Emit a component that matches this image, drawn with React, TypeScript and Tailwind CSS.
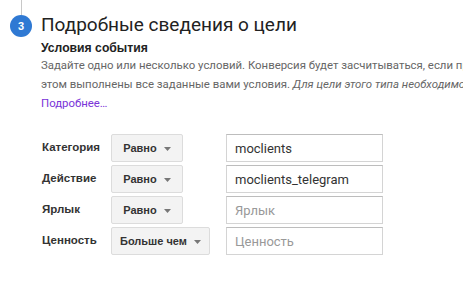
import React from "react";

const rows = [
  { label: "Категория", op: "Равно", value: "moclients", placeholder: "Категория" },
  { label: "Действие", op: "Равно", value: "moclients_telegram", placeholder: "Действие" },
  { label: "Ярлык", op: "Равно", value: "", placeholder: "Ярлык" },
  { label: "Ценность", op: "Больше чем", value: "", placeholder: "Ценность" },
];

function OpButton({ text }: { text: string }) {
  return (
    <button className="h-[28px] min-w-[72px] px-[8px] flex items-center justify-center gap-[7px] bg-[#f3f3f3] border border-[#dcdcdc] rounded-[2px] text-[11px] font-bold text-[#333] font-['Liberation_Sans',Arial,sans-serif]">
      <span>{text}</span>
      <svg width="7" height="4" viewBox="0 0 7 4" className="mt-[1px]">
        <path d="M0 0h7L3.5 4z" fill="#777" />
      </svg>
    </button>
  );
}

export default function App() {
  return (
    <div className="w-[463px] h-[283px] overflow-hidden bg-white font-['Roboto',sans-serif]">
      <div className="flex">
        {/* step marker */}
        <div className="w-[41px] shrink-0 flex flex-col items-center pl-px">
          <div className="w-px h-[15px] bg-[#c8c8c8]" />
          <div className="w-[22px] h-[22px] rounded-full bg-[#2f79d3] flex items-center justify-center text-white text-[11px] font-bold font-['Liberation_Sans',Arial,sans-serif]">
            3
          </div>
        </div>

        <div className="shrink-0 w-[600px]">
          <h2 className="text-[19px] leading-[24px] text-[#222] mt-[13px]">Подробные сведения о цели</h2>
          <div className="mt-[4px] text-[12.2px] leading-[15px] font-bold text-[#222] font-['Liberation_Sans',Arial,sans-serif]">
            Условия события
          </div>
          <p className="whitespace-nowrap text-[11.4px] leading-[19px] text-[#666]">
            Задайте одно или несколько условий. Конверсия будет засчитываться, если при
            <br />
            этом выполнены все заданные вами условия.{" "}
            <i>Для цели этого типа необходимо настроить отслеживание событий.</i>
          </p>
          <div className="mt-[1px] text-[11.4px] leading-[16px] text-[#7a33d8]">Подробнее…</div>

          <div className="mt-[23px] flex flex-col gap-[3px]">
            {rows.map((r) => (
              <div key={r.label} className="flex items-center">
                <div className="w-[70px] pl-px text-[11.5px] font-bold text-[#333] font-['Liberation_Sans',Arial,sans-serif]">
                  {r.label}
                </div>
                <div className="w-[115px]">
                  <OpButton text={r.op} />
                </div>
                <input
                  defaultValue={r.value}
                  placeholder={r.placeholder}
                  className="w-[157px] h-[28px] px-[8px] border border-[#d4d4d4] border-t-[#bdbdbd] text-[13px] text-[#333] placeholder:text-[#999] outline-none"
                />
              </div>
            ))}
          </div>
        </div>
      </div>
    </div>
  );
}
